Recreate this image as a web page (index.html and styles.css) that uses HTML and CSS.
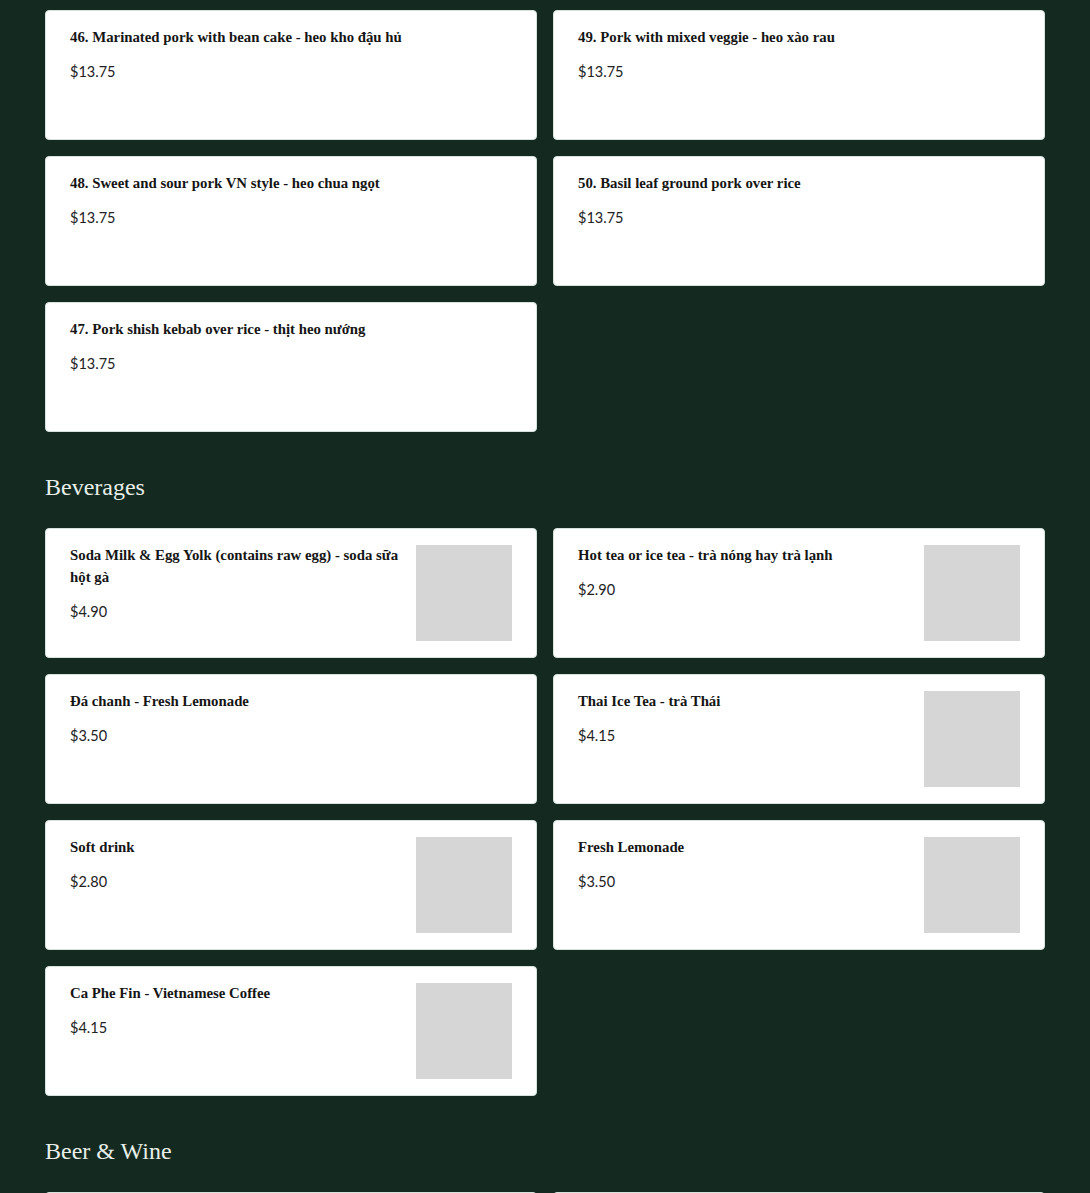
FILE: index.html
```html
<!DOCTYPE html>
<html lang="en">
<head>
<meta charset="utf-8">
<title>Menu</title>
<link rel="stylesheet" href="styles.css">
</head>
<body>
<main class="menu">
  <section class="section">
    <div class="grid">
      <div class="item"><div class="info"><h3 class="name">46. Marinated pork with bean cake - heo kho đậu hủ</h3><p class="price">$13.75</p></div></div>
      <div class="item"><div class="info"><h3 class="name">49. Pork with mixed veggie - heo xào rau</h3><p class="price">$13.75</p></div></div>
      <div class="item"><div class="info"><h3 class="name">48. Sweet and sour pork VN style - heo chua ngọt</h3><p class="price">$13.75</p></div></div>
      <div class="item"><div class="info"><h3 class="name">50. Basil leaf ground pork over rice</h3><p class="price">$13.75</p></div></div>
      <div class="item"><div class="info"><h3 class="name">47. Pork shish kebab over rice - thịt heo nướng</h3><p class="price">$13.75</p></div></div>
    </div>
  </section>

  <section class="section">
    <h2 class="section-title">Beverages</h2>
    <div class="grid">
      <div class="item"><div class="info"><h3 class="name">Soda Milk &amp; Egg Yolk (contains raw egg) - soda sữa hột gà</h3><p class="price">$4.90</p></div><div class="thumb"></div></div>
      <div class="item"><div class="info"><h3 class="name">Hot tea or ice tea - trà nóng hay trà lạnh</h3><p class="price">$2.90</p></div><div class="thumb"></div></div>
      <div class="item"><div class="info"><h3 class="name">Đá chanh - Fresh Lemonade</h3><p class="price">$3.50</p></div></div>
      <div class="item"><div class="info"><h3 class="name">Thai Ice Tea - trà Thái</h3><p class="price">$4.15</p></div><div class="thumb"></div></div>
      <div class="item"><div class="info"><h3 class="name">Soft drink</h3><p class="price">$2.80</p></div><div class="thumb"></div></div>
      <div class="item"><div class="info"><h3 class="name">Fresh Lemonade</h3><p class="price">$3.50</p></div><div class="thumb"></div></div>
      <div class="item"><div class="info"><h3 class="name">Ca Phe Fin - Vietnamese Coffee</h3><p class="price">$4.15</p></div><div class="thumb"></div></div>
    </div>
  </section>

  <section class="section">
    <h2 class="section-title">Beer &amp; Wine</h2>
    <div class="grid">
      <div class="item"></div>
      <div class="item"></div>
    </div>
  </section>
</main>
</body>
</html>
```

FILE: styles.css
```css
* { box-sizing: border-box; }

html, body {
  margin: 0;
  padding: 0;
  background: #142a20;
}

.menu {
  width: 1000px;
  margin: 0 auto;
  padding-top: 10px;
}

.section-title {
  margin: 39px 0 25px;
  font-family: "Liberation Serif", "DejaVu Serif", serif;
  font-weight: 400;
  font-size: 24px;
  line-height: 32px;
  color: #e8efe9;
}

.grid {
  display: grid;
  grid-template-columns: 1fr 1fr;
  gap: 16px;
}

.item {
  display: flex;
  gap: 12px;
  min-height: 130px;
  padding: 16px 24px;
  background: #ffffff;
  border: 1px solid #d6e2dc;
  border-radius: 4px;
}

.info {
  flex: 1;
  min-width: 0;
  margin-top: -1px;
}

.name {
  margin: 0;
  font-family: "Liberation Serif", "DejaVu Serif", serif;
  font-weight: 700;
  font-size: 14.8px;
  line-height: 22px;
  color: #151515;
}

.price {
  margin: 13px 0 0;
  font-family: "Lato", "Noto Sans", sans-serif;
  font-size: 14.5px;
  line-height: 22px;
  color: #222222;
}

.thumb {
  flex: none;
  width: 96px;
  height: 96px;
  background: #d6d6d6;
}
```
